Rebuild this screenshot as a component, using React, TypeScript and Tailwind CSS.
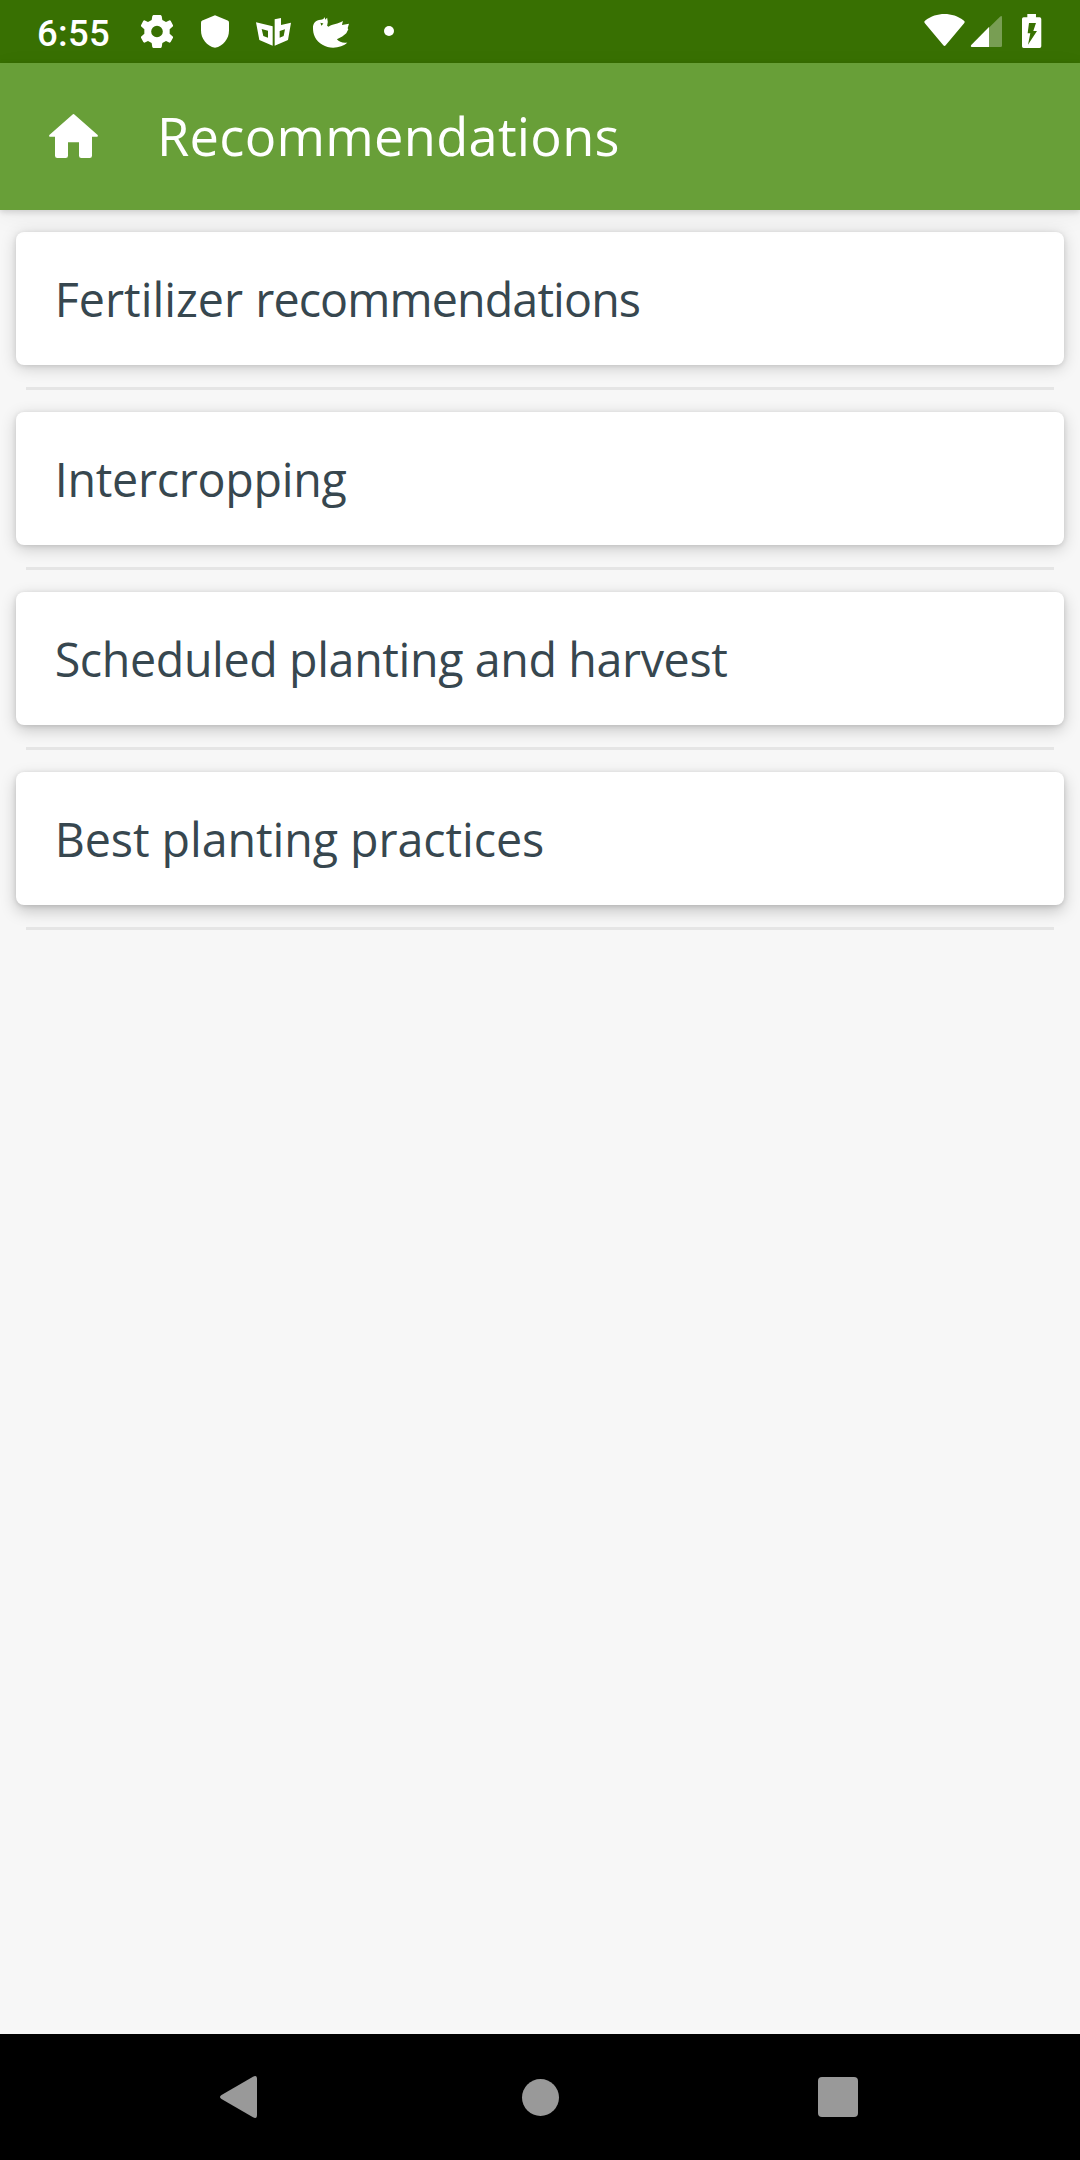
import type { ReactNode } from "react";

const items = [
  {
    words: [
      { text: "Fertilizer ", tracking: "tracking-[0.02px]" },
      { text: "recommendations", tracking: "tracking-[-0.88px]" },
    ],
    shadow: "shadow-[0_3px_16px_rgba(0,0,0,0.18),0_1px_5px_rgba(0,0,0,0.1)]",
  },
  {
    words: [{ text: "Intercropping", tracking: "tracking-[-0.27px]" }],
    shadow: "shadow-[0_4px_16px_rgba(0,0,0,0.19),0_1px_5px_rgba(0,0,0,0.11)]",
  },
  {
    words: [{ text: "Scheduled planting and harvest", tracking: "tracking-[-0.38px]" }],
    shadow: "shadow-[0_5px_16px_rgba(0,0,0,0.2),0_1px_5px_rgba(0,0,0,0.12)]",
  },
  {
    words: [{ text: "Best planting practices", tracking: "tracking-[-0.07px]" }],
    shadow: "shadow-[0_6px_16px_rgba(0,0,0,0.21),0_1px_5px_rgba(0,0,0,0.13)]",
  },
];

function Icon({ box, className, children }: { box: string; className: string; children: ReactNode }) {
  return (
    <svg viewBox={box} className={`shrink-0 overflow-visible ${className}`} fill="currentColor" aria-hidden="true">
      {children}
    </svg>
  );
}

function StatusBar() {
  return (
    <div className="flex h-[63px] shrink-0 items-start bg-[#387002] pl-[37px] pr-[39px] text-white">
      <span className="w-[104px] pt-[4px] font-['Roboto',sans-serif] text-[36.5px] leading-[60px] font-medium tracking-[0.3px]">
        6:55
      </span>
      {/* Settings */}
      <Icon box="423 45 96 99" className="mt-[15px] h-[33px] w-8">
        <path
          fillRule="evenodd"
          d="M460 45H482L485 48L487 60L498 66L509 61L512 62L519 76V79L509 88V101L519 110V113L512 126L509 128L498 123L487 129L485 142L482 144H460L457 142L455 129L444 123L433 128L430 126L423 113V110L433 101V88L423 79V76L430 62L433 61L444 66L455 60L457 48ZM471 77A17.500 17.500 0 1 0 471 112A17.500 17.500 0 1 0 471 77Z"
        />
      </Icon>
      {/* Shield */}
      <Icon box="603 46 84 98" className="mt-[15px] ml-7 h-[33px] w-7">
        <path d="M645 46L683 62Q687 64 687 68V91C687 117 670 138 645 144C620 138 603 117 603 91V68Q603 64 607 62Z" />
      </Icon>
      {/* Open book */}
      <Icon box="47 53 105 84" className="mt-[18px] ml-[27px] h-7 w-[35px]">
        <path
          fillRule="evenodd"
          d="M47 66L97 78V136L57 119ZM64 86L69 107L83 112V91ZM103 57L122 53V74L152 67L143 119L103 136ZM118 92V112L130 107L134 87Z"
        />
      </Icon>
      {/* Bird */}
      <Icon box="220 51 107 92" className="mt-[17px] ml-[22px] h-[31px] w-9">
        <path
          fillRule="evenodd"
          d="M220 84C219 70 228 60 243 59C249 59 252 57 255 51L256 59L262 53L264 66L262 77L266 80C278 72 294 72 309 63L306 75L327 71L323 84L325 87L319 99L307 109L291 117C298 125 308 129 322 127C313 137 296 142 280 142C258 142 235 130 226 111C221 101 220 92 220 84ZM242 68L245 77L251 70Z"
        />
      </Icon>
      <span className="mt-[26px] ml-[35px] size-[10px] rounded-full bg-white" />
      <div className="flex-1" />
      {/* Wi-Fi */}
      <Icon box="73 42 121 96" className="mt-[14px] h-8 w-[41px]">
        <path d="M75 62C93 48 113 42 133.500 42C154 42 174 48 192 62Q196 65 193 69L137 136Q133.500 140 130 136L74 69Q71 65 75 62Z" />
      </Icon>
      {/* Cellular signal */}
      <Icon box="213 48 93 93" className="mt-4 ml-[6px] size-[31px]">
        <path d="M300 50Q306 45 306 52V137Q306 141 302 141H216Q210 140 214 135Z" fillOpacity="0.32" />
        <path d="M267 81V141H216Q210 140 214 135Z" />
      </Icon>
      {/* Charging battery */}
      <Icon box="366 42 58 102" className="mt-[14px] ml-5 h-[34px] w-[19.300px]">
        <path
          fillRule="evenodd"
          d="M382 42H408V52H419Q424 52 424 57V139Q424 144 419 144H371Q366 144 366 139V57Q366 52 371 52H382ZM387 69L383 100H391L384 134L411 93H400L408 69Z"
        />
      </Icon>
    </div>
  );
}

function AppBar() {
  return (
    <header className="relative z-10 flex h-[147px] shrink-0 items-center bg-[#689f38] pb-[2px] pl-[49px] text-white shadow-[0_2px_6px_rgba(0,0,0,0.15),0_6px_24px_rgba(0,0,0,0.05)]">
      <Icon box="147 341 147 132" className="h-11 w-[49px]">
        <path d="M217 343Q220.500 339 224 343L293 404Q296 409 291 409H276V466Q276 473 269 473H244Q237 473 237 466V426H204V466Q204 473 197 473H172Q165 473 165 466V409H150Q145 409 148 404Z" />
      </Icon>
      <h1 className="ml-[59px] text-[52.4px] leading-[72px] tracking-[0.28px]">Recommendations</h1>
    </header>
  );
}

function NavigationBar() {
  return (
    <nav className="grid h-[126px] shrink-0 grid-cols-[220px_37px_265px_37px_259px_40px] items-center bg-black text-[#999]">
      <Icon box="0 0 37 42" className="col-start-2 h-[42px] w-[37px]">
        <path d="M33 .7Q37-1.500 37 3V39Q37 43.500 33 41.300L1.500 23Q-1.500 21 1.500 19Z" />
      </Icon>
      <span className="col-start-4 size-[37px] rounded-full bg-current" />
      <span className="col-start-6 size-10 rounded-[4px] bg-current" />
    </nav>
  );
}

export default function App() {
  return (
    <div className="flex h-[2160px] w-[1080px] flex-col overflow-hidden bg-[#f7f7f7] font-['Open_Sans','Noto_Sans',sans-serif]">
      <StatusBar />
      <AppBar />
      <main className="flex-1">
        <ul>
          {items.map((item) => (
            <li key={item.words[0].text} className="pt-[22px]">
              <div className={`mx-4 flex h-[133px] items-center rounded-[8px] bg-white pt-px pl-[38.700px] ${item.shadow}`}>
                <p className="text-[46.6px] leading-[64px] whitespace-nowrap text-[#37474f]">
                  {item.words.map((word) => (
                    <span key={word.text} className={word.tracking}>
                      {word.text}
                    </span>
                  ))}
                </p>
              </div>
              <div className="mx-[26px] mt-[22px] h-[3px] bg-[#e5e5e5]" />
            </li>
          ))}
        </ul>
      </main>
      <NavigationBar />
    </div>
  );
}
